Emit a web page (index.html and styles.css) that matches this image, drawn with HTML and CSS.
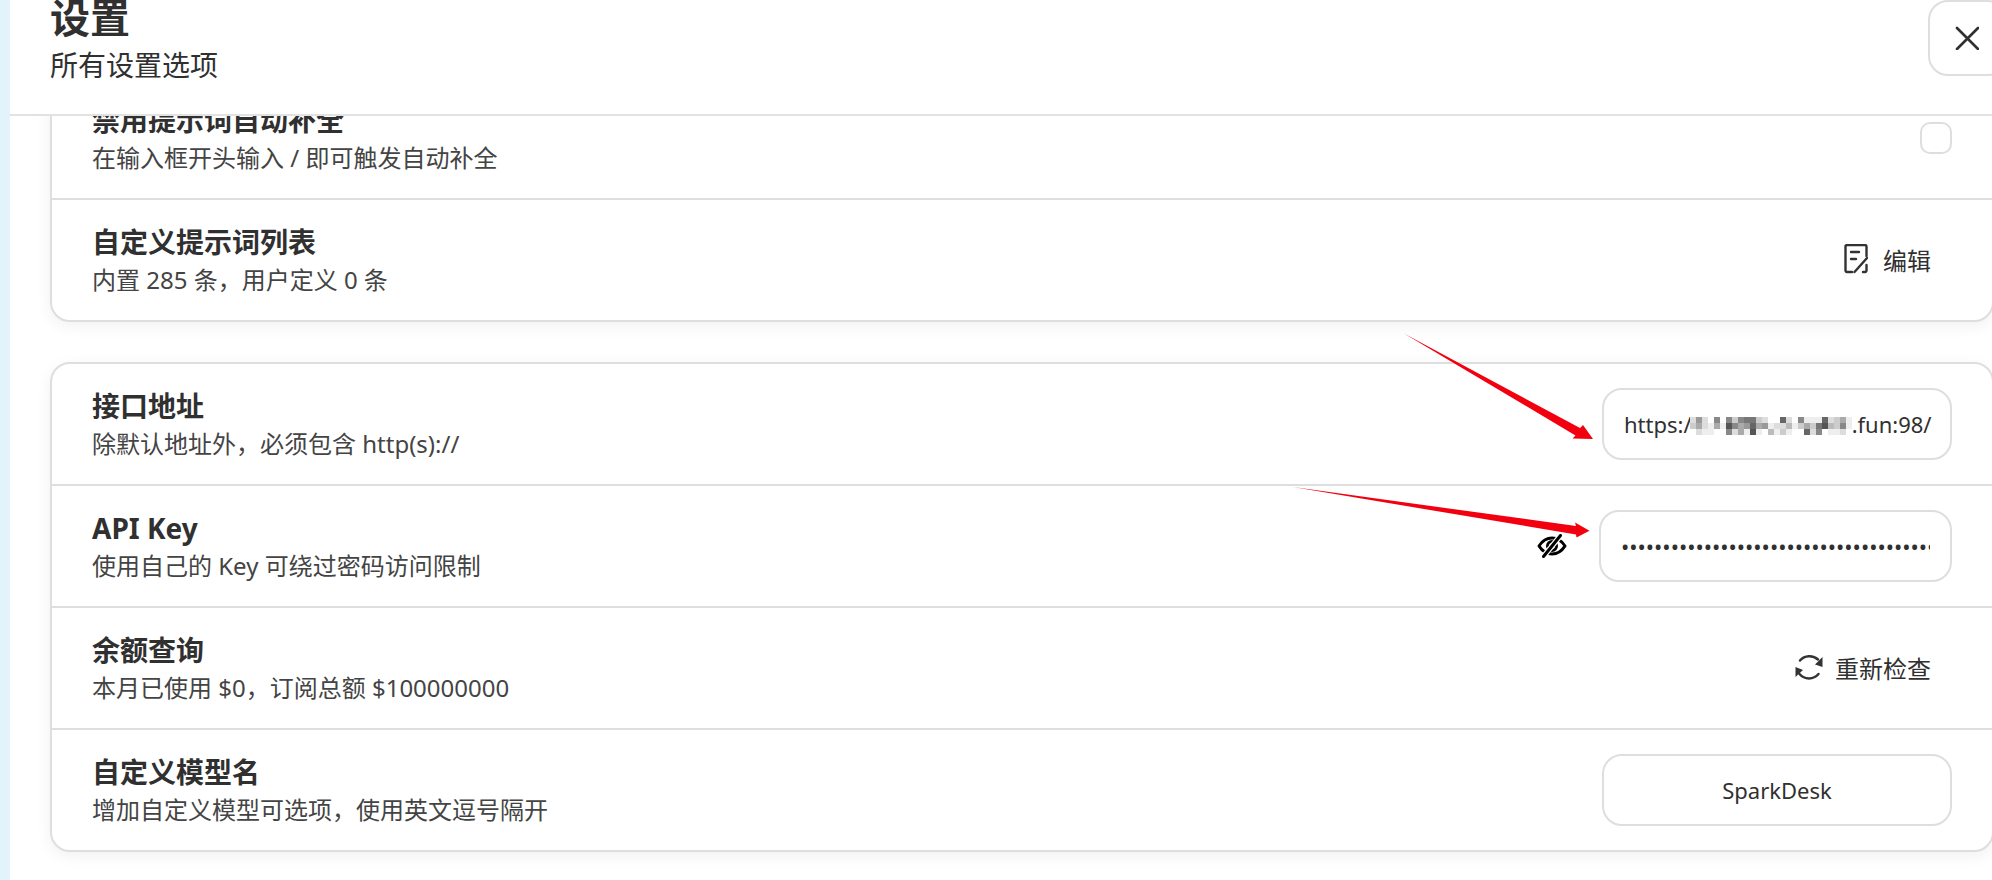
FILE: index.html
```html
<!DOCTYPE html>
<html lang="zh-CN">
<head>
  <meta charset="UTF-8" />
  <meta name="viewport" content="width=device-width, initial-scale=1.0">
  <title>设置</title>
  <link rel="stylesheet" href="styles.css">
</head>
<body>

  <div class="side-strip"></div>

  <div class="settings">
    <!-- Header -->
    <div class="header">
      <div class="header-text">
        <div class="header-title">设置</div>
        <div class="header-sub">所有设置选项</div>
      </div>
      <button class="close-btn" aria-label="关闭">
        <svg width="24" height="24" viewBox="0 0 24 24" fill="none" stroke="#303030" stroke-width="2.6" stroke-linecap="round"><path d="M2 2L23 23M23 2L2 23"/></svg>
      </button>
    </div>

    <!-- Scrolled list -->
    <div class="content">
      <div class="card first">
        <div class="row">
          <div class="row-text">
            <div class="row-title">禁用提示词自动补全</div>
            <div class="row-sub">在输入框开头输入 / 即可触发自动补全</div>
          </div>
          <input class="check" type="checkbox">
        </div>
        <div class="row">
          <div class="row-text">
            <div class="row-title">自定义提示词列表</div>
            <div class="row-sub">内置 285 条，用户定义 0 条</div>
          </div>
          <button class="text-btn">
            <svg width="24" height="30" viewBox="0 0 24 30" fill="none" stroke="#333" stroke-width="2.4" stroke-linecap="round">
              <path d="M8 28H3a1.5 1.5 0 0 1-1.5-1.5V2.5A1.5 1.5 0 0 1 3 1H21a1.5 1.5 0 0 1 1.5 1.5V12M22.5 21v5.5a1.5 1.5 0 0 1-1.5 1.5h-2"/>
              <path d="M7 8H15M7 15H12M10.5 28L23 14"/>
            </svg>
            编辑
          </button>
        </div>
      </div>

      <div class="card">
        <div class="row">
          <div class="row-text">
            <div class="row-title">接口地址</div>
            <div class="row-sub">除默认地址外，必须包含 http(s)://</div>
          </div>
          <div class="field url-field">
            https:/<svg class="mosaic" width="162" height="18" viewBox="0 0 27 3" shape-rendering="crispEdges">
              <path fill="#fff" d="M0 0h27v3h-27z"/>
              <path fill="#555" d="M6 1h1v1h-1zM22 1h1v1h-1zM10 2h1v1h-1z"/>
              <path fill="#666" d="M15 0h1v1h-1zM22 0h1v1h-1zM10 1h1v1h-1zM19 2h1v1h-1z"/>
              <path fill="#777" d="M9 0h2v1h-2zM21 1h1v1h-1z"/>
              <path fill="#888" d="M4 0h1v1h-1zM6 0h1v1h-1zM8 0h1v1h-1zM18 0h1v1h-1zM7 1h1v1h-1zM25 1h1v1h-1zM6 2h1v1h-1zM21 2h1v1h-1z"/>
              <path fill="#999" d="M1 0h1v1h-1zM9 1h1v1h-1zM12 1h1v1h-1z"/>
              <path fill="#aaa" d="M25 0h1v1h-1zM1 1h1v1h-1zM4 1h1v1h-1zM8 1h1v1h-1zM11 1h1v1h-1zM19 1h1v1h-1zM8 2h1v1h-1z"/>
              <path fill="#bbb" d="M16 1h1v1h-1zM23 1h1v1h-1zM13 2h1v1h-1z"/>
              <path fill="#ccc" d="M7 0h1v1h-1zM11 0h1v1h-1zM24 0h1v1h-1zM0 1h1v1h-1zM18 1h1v1h-1zM20 1h1v1h-1zM24 1h1v1h-1zM15 2h1v1h-1z"/>
              <path fill="#ddd" d="M0 0h1v1h-1zM2 0h1v1h-1zM12 0h1v1h-1zM16 0h1v1h-1zM23 0h1v1h-1zM2 1h1v1h-1zM14 1h2v1h-2zM1 2h1v1h-1zM7 2h1v1h-1zM20 2h1v1h-1zM25 2h1v1h-1z"/>
              <path fill="#eee" d="M19 0h3v1h-3zM26 0h1v1h-1zM3 1h1v1h-1zM5 1h1v1h-1zM13 1h1v1h-1zM17 1h1v1h-1zM26 1h1v1h-1zM2 2h2v1h-2zM9 2h1v1h-1zM11 2h1v1h-1zM14 2h1v1h-1zM16 2h1v1h-1zM23 2h2v1h-2z"/>
            </svg>.fun:98/
          </div>
        </div>
        <div class="row">
          <div class="row-text">
            <div class="row-title">API Key</div>
            <div class="row-sub">使用自己的 Key 可绕过密码访问限制</div>
          </div>
          <div class="key-control">
            <svg width="30" height="24" viewBox="0 0 30 24" fill="none" stroke="#000" stroke-width="3" stroke-linecap="round" stroke-linejoin="round">
              <path d="M2 12C5.500 6.500 9.500 4 15 4S24.500 6.500 28 12C24.500 17.500 20.500 20 15 20S5.500 17.500 2 12Z"/>
              <circle cx="15" cy="12" r="4.500"/>
              <path d="M24 1L6 23" stroke="#fff" stroke-width="5.500"/>
              <path d="M23.500 1.500L6.500 22.500"/>
            </svg>
            <input class="field key-field" type="password" value="sk-aaaaaaaaaaaaaaaaaaaaaaaaaaaaaaaaaaaaaaaaaaaaaaaaaaaaaaaaaaaaaaaa">
          </div>
        </div>
        <div class="row">
          <div class="row-text">
            <div class="row-title">余额查询</div>
            <div class="row-sub">本月已使用 $0，订阅总额 $100000000</div>
          </div>
          <button class="text-btn">
            <svg class="reload-icon" width="32" height="32" viewBox="0 0 32 32" fill="none" stroke="#333" stroke-width="2.500" stroke-linecap="round">
              <path d="M7 9.500A12.500 12.500 0 0 1 25 8.500"/>
              <path d="M25.500 23A12.500 12.500 0 0 1 6.500 23"/>
              <path d="M29.500 6V16L22 13.500Z" fill="#333" stroke="none"/>
              <path d="M2.500 16V26L10 19Z" fill="#333" stroke="none"/>
            </svg>
            重新检查
          </button>
        </div>
        <div class="row">
          <div class="row-text">
            <div class="row-title">自定义模型名</div>
            <div class="row-sub">增加自定义模型可选项，使用英文逗号隔开</div>
          </div>
          <input class="field model-field" type="text" value="SparkDesk">
        </div>
      </div>
    </div>
  </div>

  <!-- Red annotation arrows -->
  <svg class="arrows" width="1992" height="880" viewBox="0 0 1992 880">
    <polygon points="1404,333.500 1580,428 1583,425 1593,439 1572.500,438.500 1575.500,435.500"/>
    <polygon points="1293,487 1576,526 1575,522.500 1589.500,530.700 1576.500,537.500 1576,534.500"/>
  </svg>

</body>
</html>
```

FILE: styles.css
```css
html, body {
  margin: 0;
  height: 100%;
  overflow: hidden;
  font-family: "Noto Sans", "Noto Sans CJK SC", sans-serif;
  color: #303030;
  background: #fff;
}

body {
  display: flex;
}

.side-strip {
  flex: none;
  width: 10px;
  background: #e2f3fc;
}

.settings {
  flex: 1;
  min-width: 0;
  display: flex;
  flex-direction: column;
}

/* HEADER (top of it is cut off by the window) */
.header {
  flex: none;
  box-sizing: border-box;
  height: 166px;
  margin-top: -50px;
  padding: 39px 40px 0;
  display: flex;
  justify-content: space-between;
  border-bottom: 2px solid #e2e2e2;
  background: #fff;
  position: relative;
  z-index: 2;
}

.header-title {
  font-size: 40px;
  font-weight: 700;
  line-height: 58px;
}

.header-sub {
  margin-top: -2px;
  font-size: 28px;
  line-height: 40px;
}

.close-btn {
  flex: none;
  box-sizing: border-box;
  width: 80px;
  height: 76px;
  margin: 11px -56px 0 0;
  padding: 0 0 0 25px;
  display: flex;
  align-items: center;
  background: #fff;
  border: 2px solid #dedede;
  border-radius: 20px;
}

/* LIST */
.content {
  flex: 1;
  min-height: 0;
  overflow: hidden;
  padding-left: 40px;
}

.card {
  margin: 0 -2px 40px 0;
  background: #fff;
  border: 2px solid #dedede;
  border-radius: 20px;
  box-shadow: 0 4px 16px rgba(0, 0, 0, 0.06);
}

.card.first {
  margin-top: -40px;
}

.row {
  box-sizing: border-box;
  height: 122px;
  padding: 0 40px;
  display: flex;
  align-items: center;
  justify-content: space-between;
  border-bottom: 2px solid #dedede;
}

.row:last-child {
  height: 120px;
  border-bottom: none;
}

.row-text {
  padding-bottom: 2px;
}

.row-title {
  font-size: 28px;
  font-weight: 700;
  line-height: 40px;
}

.row-sub {
  font-size: 24px;
  line-height: 35px;
  color: #444;
}

/* CONTROLS */
.check {
  appearance: none;
  box-sizing: border-box;
  width: 32px;
  height: 32px;
  margin: 0;
  background: #fff;
  border: 2px solid #dedede;
  border-radius: 10px;
}

.text-btn {
  display: flex;
  align-items: center;
  gap: 15px;
  padding: 0 21px 2px 0;
  font: inherit;
  font-size: 24px;
  color: #303030;
  background: none;
  border: none;
}

.reload-icon {
  margin-right: -5px;
}

.field {
  box-sizing: border-box;
  height: 72px;
  padding: 0 20px;
  font: inherit;
  font-size: 22px;
  color: #303030;
  background: #fff;
  border: 2px solid #dedede;
  border-radius: 20px;
  outline: none;
}

.url-field {
  width: 350px;
  display: flex;
  align-items: center;
  white-space: nowrap;
  overflow: hidden;
}

.mosaic {
  flex: none;
  margin: 4px 0 0 -2px;
}

.key-control {
  display: flex;
  align-items: center;
  gap: 32px;
}

.key-field {
  width: 353px;
}

.model-field {
  width: 350px;
  text-align: center;
}

.arrows {
  position: absolute;
  top: 0;
  left: 0;
  z-index: 3;
  pointer-events: none;
  fill: #f2000f;
}
```
